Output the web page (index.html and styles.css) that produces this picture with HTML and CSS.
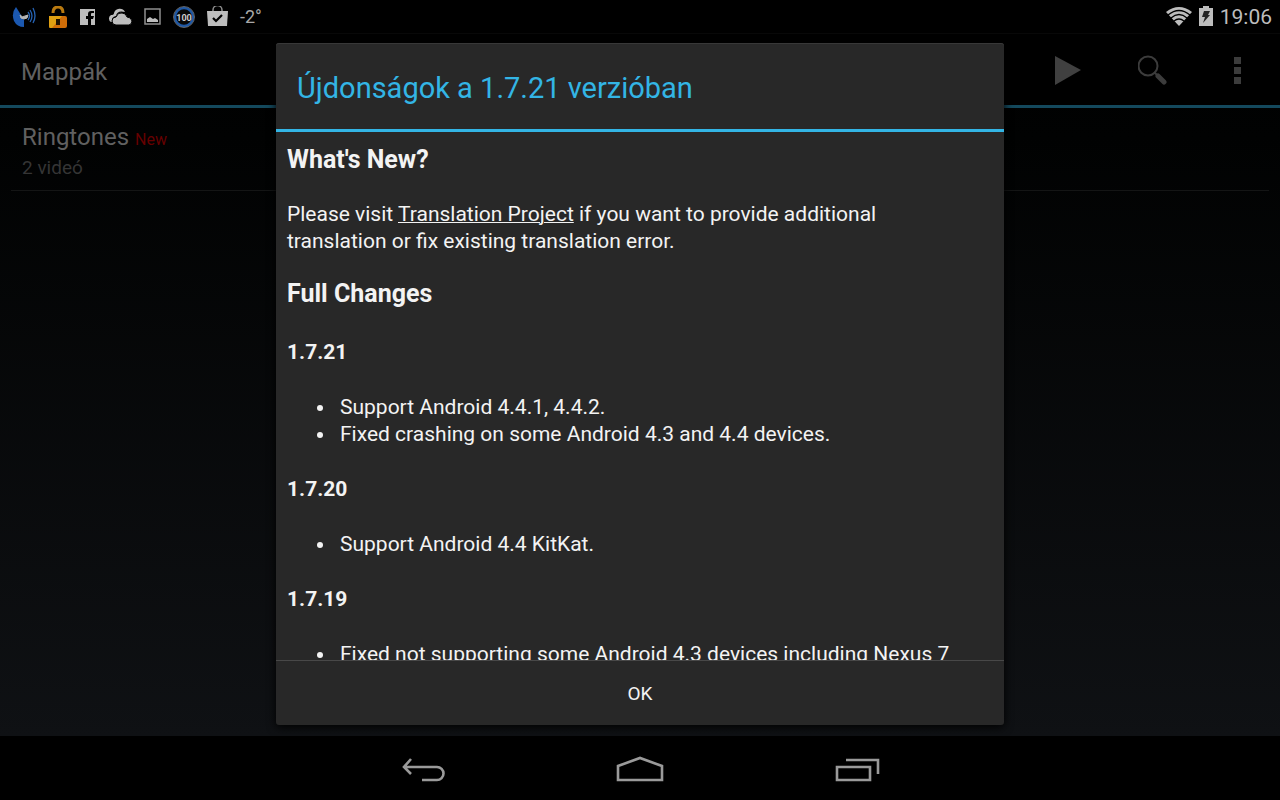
FILE: index.html
```html
<!DOCTYPE html>
<html lang="hu">
<head>
  <meta charset="UTF-8">
  <meta name="viewport" content="width=device-width, initial-scale=1.0">
  <title>Mappák</title>
  <link rel="stylesheet" href="styles.css">
</head>
<body>

  <div class="status-bar">
    <div class="notifications">
      <svg width="24" height="22" viewBox="0 0 24 22">
        <path d="M4 1 L9 9 L12 14 L12 21 Q5 21 2 15 Q-1 7 4 1Z" fill="#1b58b0"/>
        <path d="M8 9 Q10 12 13 10 L16 9 Q16 13 12 13 Q8 13 8 9Z" fill="#b5b5b5" stroke="#b5b5b5"/>
        <path d="M16 6 q3 4 0 8 M18 4 q4 6 0 12 M21 2 q4 8 0 15" fill="none" stroke="#2563b5" stroke-width="1.3"/>
      </svg>
      <svg width="20" height="22" viewBox="0 0 20 22">
        <path d="M5 7 Q5 1 10 1 Q15 1 15 7" fill="none" stroke="#b97a10" stroke-width="3"/>
        <rect x="1" y="10" width="18" height="12" rx="2" fill="#cf6d08"/>
        <path d="M1 10 H14 L4 22 H2 Q1 22 1 20Z" fill="#dfa012"/>
        <path d="M8 13 h4 v6 h-4z" fill="#201200"/>
      </svg>
      <svg width="15" height="16" viewBox="0 0 15 16">
        <path d="M0 0 H15 V16 H0Z" fill="#bdbdbd"/>
        <path d="M8 16 V10 H6 V7 H8 V5 Q8 2 11 2 H14 V4 H12 Q11 4 11 5 V7 H14 L13 10 H11 V16Z" fill="#000"/>
      </svg>
      <svg width="25" height="17" viewBox="0 0 25 17">
        <path d="M4 14 a4 4 0 0 1 0 -7 Q7 7 7 5 A6 6 0 0 1 18 4 Q10 2 9 8 Q4 9 5 14Z" fill="#bdbdbd"/>
        <path d="M9 17 a4 4 0 0 1 0 -8 Q11 4 15 5 Q19 5 20 9 Q24 9 25 13 Q25 16 22 17Z" fill="#bdbdbd" stroke="#000" stroke-width="1"/>
      </svg>
      <svg width="17" height="17" viewBox="0 0 17 17">
        <rect x="1" y="1" width="15" height="15" fill="none" stroke="#8e8e8e" stroke-width="1.5"/>
        <path d="M3 14 V11 L6 9 L9 11 L11 10 L14 12 V14Z" fill="#bdbdbd"/>
      </svg>
      <svg class="battery-level" width="22" height="22" viewBox="0 0 22 22">
        <circle cx="11" cy="11" r="9" fill="#080808" stroke="#1f58a4" stroke-width="2.5"/>
        <circle cx="11" cy="11" r="10.5" fill="none" stroke="#777" stroke-width="0.8"/>
        <text x="11" y="15" text-anchor="middle">100</text>
      </svg>
      <svg width="21" height="22" viewBox="0 0 21 22">
        <path d="M6 6 V4 a4 4 0 0 1 9 0 V6" fill="none" stroke="#8e8e8e" stroke-width="1.5"/>
        <path d="M0 5 H21 L20 20 H1Z" fill="#bdbdbd"/>
        <path d="M6 12 L9 15 L15 9" fill="none" stroke="#000" stroke-width="2.2"/>
      </svg>
      <span class="temperature">-2°</span>
    </div>
    <div class="system">
      <svg width="26" height="20" viewBox="0 0 26 20">
        <path d="M0 5 Q13 -5 26 5 L13 19Z" fill="#bdbdbd"/>
        <path d="M2 8 Q13 -1 24 8 M5 11 Q13 4 21 11 M8 14 Q13 10 18 14" fill="none" stroke="#000" stroke-width="1.3"/>
      </svg>
      <svg width="14" height="21" viewBox="0 0 14 21">
        <path d="M4 0 H10 V2 H14 V20 H0 V2 H4Z" fill="#bdbdbd"/>
        <path d="M5 5 H11 L9 9 H11 L4 17 L6 11 H3Z" fill="#222"/>
      </svg>
      <span class="clock">19:06</span>
    </div>
  </div>

  <div class="app">
    <div class="action-bar">
      <h1>Mappák</h1>
      <div class="actions">
        <button type="button" aria-label="Play">
          <svg width="30" height="30" viewBox="0 0 30 30"><path d="M2 1 L28 15 L2 30Z" fill="#404040"/></svg>
        </button>
        <button type="button" aria-label="Search">
          <svg width="30" height="30" viewBox="0 0 30 30">
            <circle cx="10" cy="11" r="9.5" fill="none" stroke="#3c3c3c" stroke-width="2"/>
            <path d="M16 17 L20 21" stroke="#3c3c3c" stroke-width="2"/>
            <path d="M20 21 L26 27" stroke="#3c3c3c" stroke-width="5" stroke-linecap="round"/>
          </svg>
        </button>
        <button type="button" aria-label="More">
          <svg width="30" height="30" viewBox="0 0 30 30"><path d="M11 2 h7 v7 h-7z M11 12 h7 v7 h-7z M11 22 h7 v7 h-7z" fill="#3c3c3c"/></svg>
        </button>
      </div>
    </div>

    <ul class="folders">
      <li>
        <div class="folder-name">Ringtones <span class="new">New</span></div>
        <div class="folder-count">2 videó</div>
      </li>
    </ul>

    <div class="overlay">
      <div class="dialog" role="dialog" aria-labelledby="dialogTitle">
        <h2 class="dialog-title" id="dialogTitle">Újdonságok a 1.7.21 verzióban</h2>
        <div class="dialog-content">
          <h3>What's New?</h3>
          <p>Please visit <a href="#">Translation Project</a> if you want to provide additional translation or fix existing translation error.</p>
          <h3>Full Changes</h3>
          <h4>1.7.21</h4>
          <ul>
            <li>Support Android 4.4.1, 4.4.2.</li>
            <li>Fixed crashing on some Android 4.3 and 4.4 devices.</li>
          </ul>
          <h4>1.7.20</h4>
          <ul>
            <li>Support Android 4.4 KitKat.</li>
          </ul>
          <h4>1.7.19</h4>
          <ul>
            <li>Fixed not supporting some Android 4.3 devices including Nexus 7</li>
          </ul>
        </div>
        <button type="button" class="ok-btn">OK</button>
      </div>
    </div>
  </div>

  <div class="nav-bar">
    <button type="button" aria-label="Back">
      <svg width="48" height="28" viewBox="0 0 48 28">
        <path d="M11 3 L4 11 L11 18 M4 11 H37 a6.5 6.5 0 0 1 0 13 H22" fill="none" stroke="#9a9a9a" stroke-width="2.6"/>
      </svg>
    </button>
    <button type="button" aria-label="Home">
      <svg width="48" height="28" viewBox="0 0 48 28">
        <path d="M2 24 V10 L24 2 L46 10 V24Z" fill="none" stroke="#9a9a9a" stroke-width="2.6"/>
      </svg>
    </button>
    <button type="button" aria-label="Recent apps">
      <svg width="48" height="28" viewBox="0 0 48 28">
        <path d="M5 11 H38 V24 H5Z M14 4 H46 V18" fill="none" stroke="#9a9a9a" stroke-width="2.6"/>
      </svg>
    </button>
  </div>

</body>
</html>
```

FILE: styles.css
```css
body {
  font-family: Roboto, sans-serif;
  margin: 0;
  height: 100vh;
  display: flex;
  flex-direction: column;
  background-color: #000;
  color: #f3f3f3;
  overflow: hidden;
}

h1, h2, h3, h4, p, ul {
  margin: 0;
  padding: 0;
}

button {
  font-family: inherit;
  color: inherit;
  background: none;
  border: none;
  padding: 0;
  cursor: pointer;
}

svg {
  display: block;
}

.status-bar {
  height: 33px;
  display: flex;
  justify-content: space-between;
  align-items: center;
  padding: 0 8px 0 12px;
  color: #bdbdbd;
}

.notifications {
  display: flex;
  align-items: center;
  gap: 12px;
}

.battery-level text {
  font-size: 9px;
  font-weight: bold;
  fill: #ccc;
}

.temperature {
  font-size: 18px;
  color: #a8a8a8;
}

.system {
  display: flex;
  align-items: center;
  gap: 7px;
}

.clock {
  font-size: 21px;
}

.app {
  flex: 1;
  min-height: 0;
  position: relative;
  background: linear-gradient(#000, #010202 15%, #0f1114);
}

.action-bar {
  height: 71px;
  display: flex;
  justify-content: space-between;
  align-items: center;
  padding-left: 21px;
  background-color: #000;
  border-top: 1px solid #080808;
  border-bottom: 3px solid #14495d;
}

.action-bar h1 {
  font-size: 24px;
  font-weight: normal;
  line-height: 32px;
  padding-top: 4px;
  color: #606060;
}

.actions {
  display: flex;
}

.actions button {
  width: 85px;
  display: flex;
  justify-content: center;
}

.folders {
  list-style: none;
  padding: 0 11px;
}

.folders li {
  padding: 14px 11px 10px;
  border-bottom: 1px solid #141515;
}

.folder-name {
  font-size: 24px;
  line-height: 30px;
  color: #606060;
}

.new {
  font-size: 16px;
  color: #600;
}

.folder-count {
  font-size: 19px;
  line-height: 25px;
  color: #353535;
}

.overlay {
  position: absolute;
  inset: 0;
  display: flex;
  justify-content: center;
  padding: 10px 16px 11px;
}

.dialog {
  width: 100%;
  max-width: 728px;
  display: flex;
  flex-direction: column;
  background-color: #282828;
  border-radius: 3px;
  box-shadow: 0 2px 10px #000, inset 0 1px #383838;
}

.dialog-title {
  font-size: 29px;
  font-weight: normal;
  line-height: 38px;
  color: #33b5e5;
  padding: 26px 21px 22px;
  border-bottom: 3px solid #33b5e5;
}

.dialog-content {
  flex: 1;
  min-height: 0;
  overflow: hidden;
  padding: 12px 24px 11px 11px;
  font-size: 21px;
  line-height: 27px;
}

.dialog-content h3 {
  font-size: 25px;
  line-height: 32px;
  margin-bottom: 25px;
}

.dialog-content h4 {
  font-size: 21px;
  margin: 28px 0;
}

.dialog-content h3 + h4 {
  margin-top: 29px;
}

.dialog-content p {
  margin-bottom: 23px;
}

.dialog-content a {
  color: inherit;
  text-decoration-thickness: 1px;
}

.dialog-content ul {
  padding-left: 49px;
}

.dialog-content li {
  padding-left: 4px;
}

.ok-btn {
  height: 65px;
  font-size: 19px;
  border-top: 1px solid #484848;
}

.nav-bar {
  height: 61px;
  display: flex;
  justify-content: center;
  align-items: center;
  gap: 168px;
  padding-top: 3px;
}
```
